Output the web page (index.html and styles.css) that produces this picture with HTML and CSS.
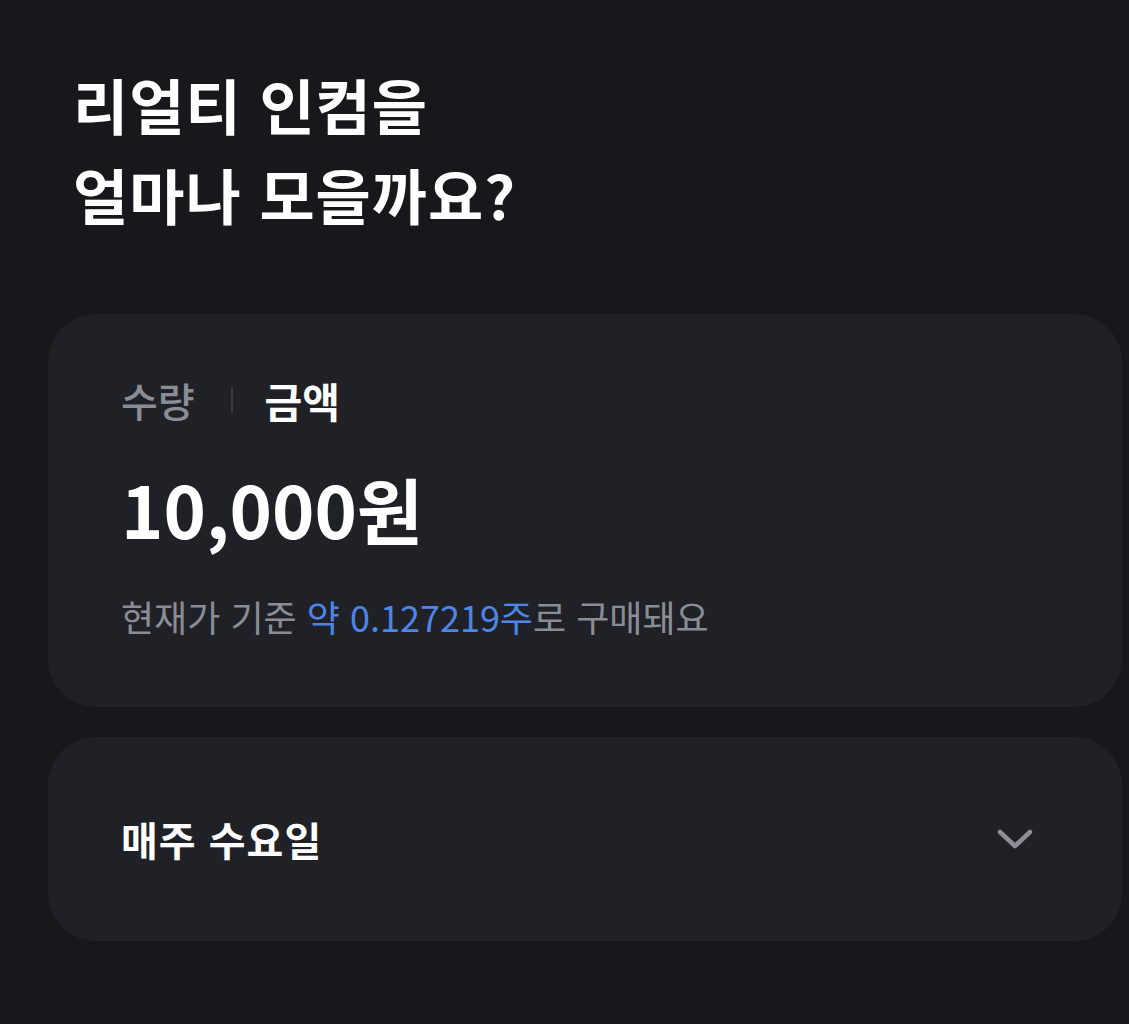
FILE: index.html
```html
<!DOCTYPE html>
<html lang="ko">
<head>
    <meta charset="UTF-8">
    <meta name="viewport" content="width=device-width, initial-scale=1.0">
    <title>리얼티 인컴</title>
    <link rel="stylesheet" href="styles.css">
</head>
<body>
    <div class="page">
        <h1 class="title">리얼티 인컴을<br>얼마나 모을까요?</h1>

        <div class="card amount-card">
            <div class="tabs">
                <span class="tab">수량</span>
                <span class="tab-divider"></span>
                <span class="tab active">금액</span>
            </div>
            <div class="amount">10,000원</div>
            <p class="hint">현재가 기준 <span class="accent">약 0.127219주</span>로 구매돼요</p>
        </div>

        <!-- 반복 주기 선택 -->
        <div class="card schedule-card">
            <span class="schedule">매주 수요일</span>
            <svg class="chevron" width="36" height="22" viewBox="0 0 36 22">
                <path d="M3 4 L18 18 L33 4" fill="none" stroke="#8e8f96" stroke-width="4.5" stroke-linecap="round" stroke-linejoin="round"/>
            </svg>
        </div>
    </div>
</body>
</html>
```

FILE: styles.css
```css
body {
    margin: 0;
    background-color: #18181c;
    font-family: "Noto Sans CJK KR", "Noto Sans", sans-serif;
    color: #fff;
}

.page {
    padding: 59px 7px 40px 48px;
}

.title {
    margin: 0 0 75px 25px;
    font-size: 60px;
    line-height: 90px;
    font-weight: 700;
    letter-spacing: 1px;
}

.card {
    background-color: #202127;
    border-radius: 48px;
    padding: 0 73px;
}

.amount-card {
    padding-top: 60px;
    padding-bottom: 67px;
    margin-bottom: 30px;
}

.tabs {
    display: flex;
    align-items: center;
    font-size: 40px;
    line-height: 52px;
    font-weight: 500;
}

.tab {
    color: #8b8d94;
}

.tab.active {
    color: #fff;
    font-weight: 700;
    font-size: 41px;
}

.tab-divider {
    width: 2px;
    height: 26px;
    background-color: #3a3b41;
    margin: 0 32px 0 36px;
}

.amount {
    margin-top: 32px;
    font-size: 72px;
    line-height: 100px;
    font-weight: 700;
    letter-spacing: 0;
}

.hint {
    margin: 34px 0 0;
    font-size: 36px;
    line-height: 48px;
    color: #8b8d94;
    letter-spacing: 0;
}

.accent {
    color: #4d86e8;
}

.schedule-card {
    height: 204px;
    display: flex;
    align-items: center;
    justify-content: space-between;
}

.schedule {
    font-size: 40px;
    font-weight: 700;
    letter-spacing: 1px;
}

.chevron {
    margin-right: 16px;
}
```
